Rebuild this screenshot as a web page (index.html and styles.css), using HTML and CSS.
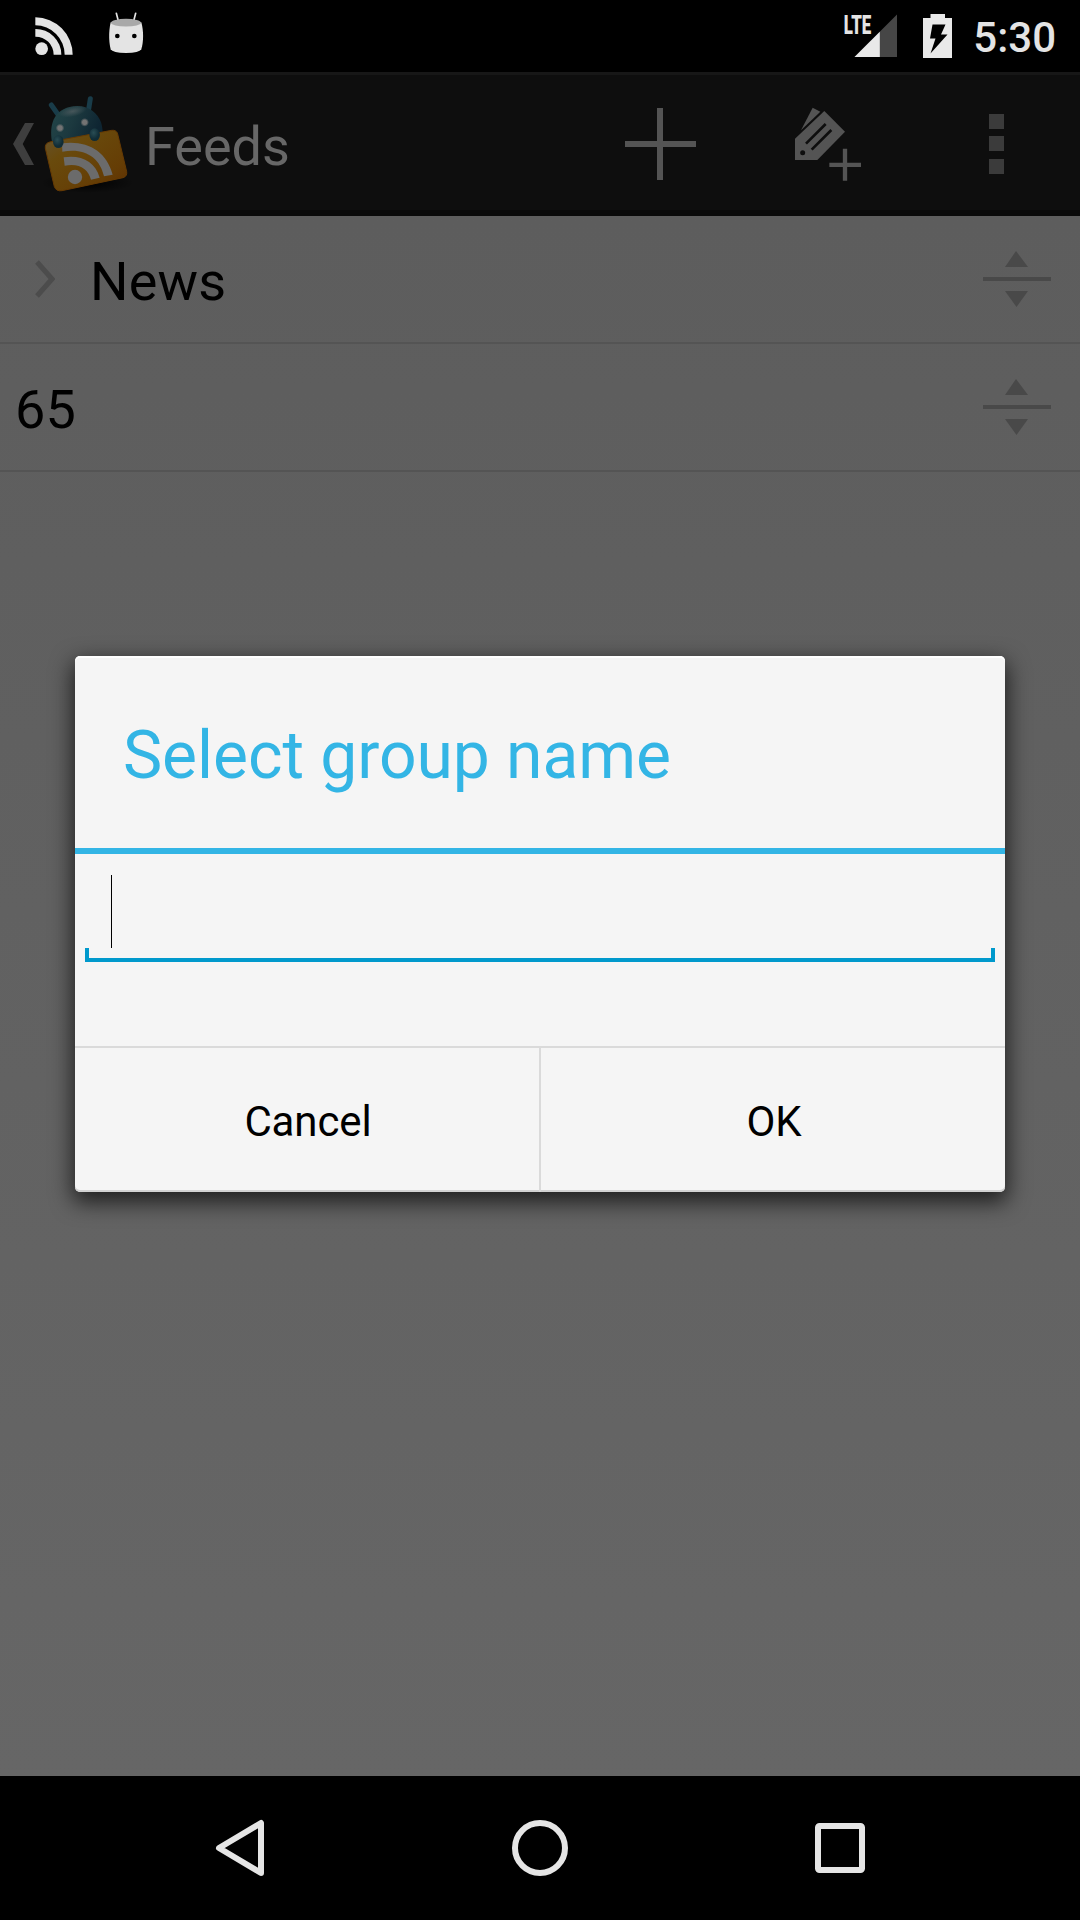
FILE: index.html
```html
<!DOCTYPE html>
<html lang="en">
<head>
<meta charset="utf-8">
<title>Feeds</title>
<link rel="stylesheet" href="styles.css">
</head>
<body>
<div class="screen">
  <header class="status-bar">
    <svg class="status-rss" width="38" height="38" viewBox="106 51 114 114" fill="#e4e4e4">
      <circle cx="126" cy="146" r="19"/>
      <path d="M107 52A112 112 0 0 1 219 164H195A88 88 0 0 0 107 76Z"/>
      <path d="M107 87A77 77 0 0 1 185 164H162A54 54 0 0 0 107 110Z"/>
    </svg>
    <svg class="status-droid" width="36" height="42" viewBox="324 36 108 126">
      <path d="M349 40L356 67M407 40L400 67" stroke="#e4e4e4" stroke-width="5" stroke-linecap="round"/>
      <path d="M332 67H424C431 92 431 125 424 148Q418 159 378 159Q338 159 332 148C326 125 326 92 332 67Z" fill="#e4e4e4"/>
      <ellipse cx="378" cy="68" rx="45" ry="11.500" fill="#a9a9a9"/>
      <circle cx="352" cy="108" r="7"/><circle cx="403" cy="108" r="7"/>
    </svg>
    <div class="status-right">
      <svg class="signal" width="54" height="44" viewBox="0 0 54 44">
        <path d="M53 .5V43H10.500Z" fill="#464646"/>
        <path d="M35.800 17.700V43H10.500Z" fill="#e9e9e9"/>
        <text class="lte" x="-0.300" y="19.500" textLength="27.500" lengthAdjust="spacingAndGlyphs">LTE</text>
      </svg>
      <svg width="29" height="44" viewBox="0 0 29 44">
        <path d="M7.500 0H22V4H29V44H0V4H7.500Z" fill="#e9e9e9"/>
        <path d="M9.500 10.500H22.500L18 20.500H24.500L7.500 39.500L12.500 24.500H7Z"/>
      </svg>
      <span class="clock">5:30</span>
    </div>
  </header>

  <nav class="action-bar">
    <svg class="up" width="21" height="42" viewBox="0 0 21 42"><path d="M12 0H21L9.700 21L21 42H12L0 21Z" fill="#3e3e3e"/></svg>
    <svg class="app-icon" width="95" height="110" viewBox="120 270 285 330">
      <defs>
        <linearGradient id="card" x1="0" y1="0" x2="1" y2="1">
          <stop offset="0" stop-color="#655332"/><stop offset=".3" stop-color="#694a0c"/><stop offset=".75" stop-color="#653d05"/><stop offset="1" stop-color="#5e2f03"/>
        </linearGradient>
        <linearGradient id="head" x1="0" y1="0" x2="1" y2=".3">
          <stop offset="0" stop-color="#234649"/><stop offset=".5" stop-color="#1c393f"/><stop offset="1" stop-color="#0e2532"/>
        </linearGradient>
        <radialGradient id="shine"><stop offset="0" stop-color="#46565a"/><stop offset="1" stop-color="#46565a" stop-opacity="0"/></radialGradient>
        <radialGradient id="hand" cx=".4" cy=".35"><stop offset="0" stop-color="#294d54"/><stop offset="1" stop-color="#102c36"/></radialGradient>
        <radialGradient id="ground"><stop offset="0" stop-color="#000" stop-opacity=".9"/><stop offset="1" stop-color="#000" stop-opacity="0"/></radialGradient>
        <radialGradient id="eye"><stop offset=".5" stop-color="#737373"/><stop offset="1" stop-color="#737373" stop-opacity="0"/></radialGradient>
      </defs>
      <ellipse cx="262" cy="549" rx="140" ry="30" fill="url(#ground)"/>
      <path d="M154 315L173 342M271 296L266 328" stroke="#193c49" stroke-width="15" stroke-linecap="round"/>
      <path d="M156 425C148 375 160 333 209 321C255 309 292 335 303 367Q308 382 309 410Z" fill="url(#head)"/>
      <ellipse cx="218" cy="334" rx="42" ry="16" transform="rotate(-12 218 334)" fill="url(#shine)"/>
      <circle cx="180" cy="384" r="13" fill="url(#eye)"/><circle cx="254" cy="367" r="13" fill="url(#eye)"/>
      <path d="M149 426L335 391Q349 389 353 402L380 515Q382 529 369 533L186 572Q169 575 163 560L136 445Q134 430 149 426Z" fill="url(#card)" stroke="#663a03" stroke-width="3"/>
      <g fill="#6b6b6b">
        <circle cx="225" cy="531" r="21.500"/>
        <path d="M186 430C261 420 319 452 338 524L312 529C300 472 253 442 187 455Z"/>
        <path d="M191 472C243 464 286 484 299 533L273 539C264 506 238 489 194 497Z"/>
      </g>
      <ellipse cx="175" cy="425" rx="16" ry="19" fill="url(#hand)"/><ellipse cx="284" cy="404" rx="16" ry="19" fill="url(#hand)"/>
    </svg>
    <span class="bar-title">Feeds</span>
    <div class="actions">
      <svg width="71" height="72" viewBox="0 0 71 72"><path d="M35 0V72M0 36H71" stroke="#545454" stroke-width="6"/></svg>
      <svg class="labels" width="66" height="74" viewBox="585 81 198 222">
        <path d="M603 151L638 83L661 95Z" fill="#545454"/>
        <path d="M585 176L673 93L735 155L652 240H585Z" fill="#545454"/>
        <path d="M618 191L677 132M635 209L694 150" stroke="#0e0e0e" stroke-width="8"/>
        <circle cx="608" cy="218" r="7.500" fill="#0e0e0e"/>
        <path d="M735 206V302M688 254.500H783" stroke="#545454" stroke-width="13"/>
      </svg>
      <svg width="15" height="60" viewBox="0 0 15 60" fill="#3b3b3b"><path d="M0 0H15V15H0ZM0 22H15V37H0ZM0 45H15V60H0Z"/></svg>
    </div>
  </nav>

  <main class="feed-list">
    <div class="row">
      <svg class="chevron" width="20" height="38" viewBox="0 0 20 38"><path d="M2 2L17 19L2 36" fill="none" stroke="#4c4c4c" stroke-width="5"/></svg>
      <span class="row-label">News</span>
      <svg class="drag" width="68" height="56" viewBox="0 0 68 56" fill="#494949"><path d="M33 0L45 16H22ZM0 26H68V30H0ZM22 40H45L33.500 56Z"/></svg>
    </div>
    <div class="row">
      <span class="row-label">65</span>
      <svg class="drag" width="68" height="56" viewBox="0 0 68 56" fill="#494949"><path d="M33 0L45 16H22ZM0 26H68V30H0ZM22 40H45L33.500 56Z"/></svg>
    </div>
  </main>

  <footer class="nav-bar">
    <svg width="50" height="58" viewBox="0 0 50 58"><path d="M46 4V54L4 29Z"/></svg>
    <svg width="58" height="58" viewBox="0 0 58 58"><circle cx="29" cy="29" r="25"/></svg>
    <svg width="50" height="50" viewBox="0 0 50 50"><rect x="3" y="3" width="44" height="44" rx="1.500"/></svg>
  </footer>

  <section class="dialog">
    <h1 class="dialog-title">Select group name</h1>
    <div class="dialog-body">
      <div class="field"><span class="caret"></span></div>
    </div>
    <div class="buttons">
      <button class="button">Cancel</button>
      <button class="button">OK</button>
    </div>
  </section>
</div>
</body>
</html>
```
FILE: styles.css
```css
*, *::after { box-sizing: border-box; }

body {
  margin: 0;
  background: #000;
  font-family: Roboto, "Liberation Sans", sans-serif;
}

svg { display: block; flex: none; }

.screen {
  position: relative;
  display: flex;
  flex-direction: column;
  width: 1080px;
  height: 1920px;
  overflow: hidden;
}

.status-bar {
  display: flex;
  align-items: flex-start;
  height: 72px;
  padding: 0 24px 0 35px;
  background: #000;
}

.status-rss { margin-top: 17px; }
.status-droid { margin: 12px 0 0 35px; }

.status-right {
  display: flex;
  gap: 25px;
  margin-left: auto;
  padding-top: 14px;
}

.signal { overflow: visible; }
.lte { font-size: 26px; font-weight: 900; fill: #e4e4e4; }

.clock {
  margin: -1px 0 0 -4px;
  color: #e4e4e4;
  font-size: 42px;
  font-weight: 500;
  line-height: 50px;
}

.action-bar {
  display: flex;
  align-items: center;
  height: 144px;
  padding: 0 76px 0 13px;
  background: #0e0e0e;
  box-shadow: inset 0 3px #171717, inset 0 -6px #0a0a0a;
}

.app-icon { margin: 2px 0 0 6px; }

.bar-title {
  margin: 5px 0 0 10px;
  color: #676767;
  font-size: 54px;
  line-height: 64px;
}

.actions { display: flex; align-items: center; margin-left: auto; }
.labels { margin: 0 128px 0 99px; }

.feed-list {
  flex: 1;
  background: linear-gradient(#5d5d5d, #666);
}

.row {
  display: flex;
  align-items: center;
  height: 128px;
  padding: 0 29px 0 15px;
  border-bottom: 2px solid #545454;
}

.chevron { margin: 0 35px 0 20px; }

.row-label {
  margin-top: 5px;
  color: #000;
  font-size: 54px;
  line-height: 64px;
  letter-spacing: .2px;
}

.drag { margin-left: auto; }

.nav-bar {
  display: flex;
  align-items: center;
  justify-content: space-between;
  height: 144px;
  padding: 0 215px;
  background: #000;
}

.nav-bar svg {
  fill: none;
  stroke: #e5e5e5;
  stroke-width: 6;
  stroke-linejoin: round;
}

.dialog {
  position: absolute;
  top: 656px;
  left: 75px;
  display: flex;
  flex-direction: column;
  width: 930px;
  height: 536px;
  border-radius: 5px;
  background: #f5f5f5;
  box-shadow: inset 0 2px #fff, inset 0 -2px #d2d2d2, 0 8px 22px 2px rgba(0, 0, 0, .7);
}

.dialog-title {
  height: 198px;
  margin: 0;
  padding: 4px 48px 0;
  border-bottom: 6px solid #33b5e5;
  color: #33b5e5;
  font-size: 66px;
  font-weight: 400;
  line-height: 192px;
  letter-spacing: -.07px;
}

.dialog-body { flex: 1; padding: 21px 10px 0; }

.field {
  display: flex;
  flex-direction: column;
  height: 87px;
}

.caret { width: 1px; height: 73px; margin-left: 26px; background: #000; }

.field::after {
  content: "";
  height: 14px;
  border: solid #0099cc;
  border-width: 0 4px 4px;
}

.buttons {
  display: flex;
  height: 146px;
  border-top: 2px solid #dadada;
}

.button {
  flex: 1;
  padding: 3px 0 0 2px;
  border: 0;
  background: none;
  color: #000;
  font: 42px/50px Roboto, "Liberation Sans", sans-serif;
  letter-spacing: -.1px;
}

.button + .button { border-left: 2px solid #dadada; }
```
